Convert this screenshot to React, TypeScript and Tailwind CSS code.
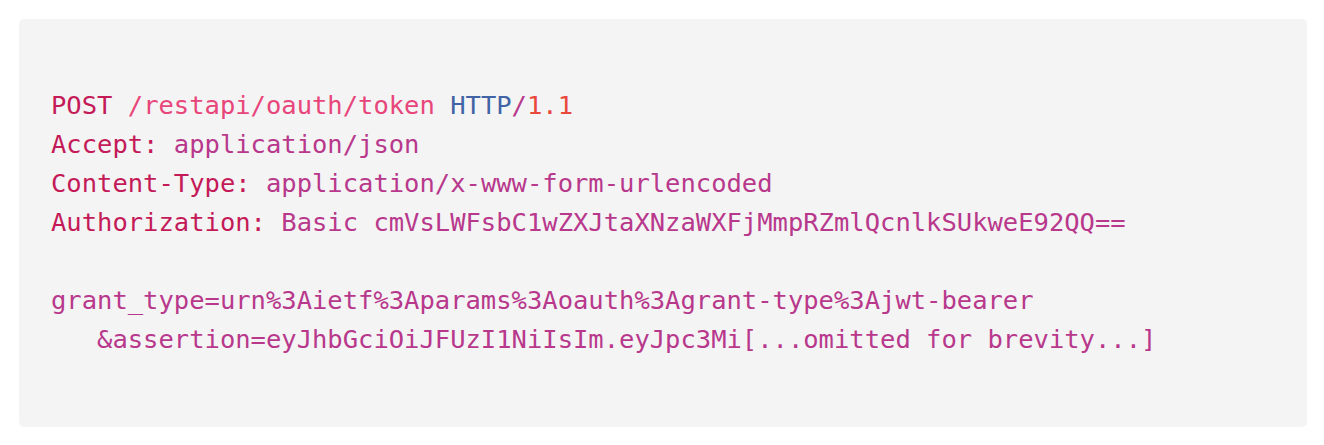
import React from "react";

const K = "text-[#c41a58]";
const V = "text-[#b8388c]";

export default function App() {
  return (
    <div className="w-[1324px] h-[445px] bg-white pt-[19px] pl-[19px]">
      <div className="w-[1288px] h-[408px] bg-[#f4f4f4] rounded-[5px] pt-[67px] pl-[32px]">
        <pre
          className="m-0 text-[25.5px] leading-[39px] whitespace-pre"
          style={{ fontFamily: '"DejaVu Sans Mono", "Liberation Mono", monospace' }}
        >
          <div>
            <span className={K}>POST</span>{" "}
            <span className="text-[#e8457a]">/restapi/oauth/token</span>{" "}
            <span className="text-[#4063a6]">HTTP</span>
            <span className={V}>/</span>
            <span className="text-[#e8473c]">1.1</span>
          </div>
          <div>
            <span className={K}>Accept:</span>
            <span className={V}> application/json</span>
          </div>
          <div>
            <span className={K}>Content-Type:</span>
            <span className={V}> application/x-www-form-urlencoded</span>
          </div>
          <div>
            <span className={K}>Authorization:</span>
            <span className={V}> Basic cmVsLWFsbC1wZXJtaXNzaWXFjMmpRZmlQcnlkSUkweE92QQ==</span>
          </div>
          <div>{" "}</div>
          <div className={V}>grant_type=urn%3Aietf%3Aparams%3Aoauth%3Agrant-type%3Ajwt-bearer</div>
          <div className={V}>   &assertion=eyJhbGciOiJFUzI1NiIsIm.eyJpc3Mi[...omitted for brevity...]</div>
        </pre>
      </div>
    </div>
  );
}
